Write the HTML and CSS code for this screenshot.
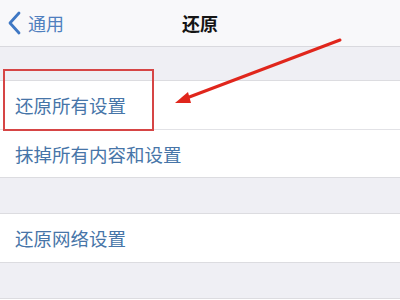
FILE: index.html
```html
<!DOCTYPE html>
<html lang="zh-CN">
<head>
  <meta charset="UTF-8" />
  <title>还原</title>
  <link rel="stylesheet" href="styles.css">
</head>
<body>
  <header class="nav">
    <div class="back">
      <svg class="chev" width="14" height="24" viewBox="0 0 14 24">
        <path d="M12 2 L3 12 L12 22" fill="none" stroke="#3f78c4" stroke-width="2.8" stroke-linecap="round" stroke-linejoin="round"/>
      </svg>
      <span>通用</span>
    </div>
    <h1>还原</h1>
  </header>

  <div class="gap first"></div>
  <ul class="group">
    <li class="row">还原所有设置</li>
    <li class="row">抹掉所有内容和设置</li>
  </ul>

  <div class="gap"></div>
  <ul class="group">
    <li class="row">还原网络设置</li>
  </ul>

  <div class="gap"></div>
  <div class="group tail"></div>

  <!-- 标注 -->
  <div class="mark-box"></div>
  <svg class="mark-arrow" width="400" height="300" viewBox="0 0 400 300">
    <path d="M340 40 L184 99" stroke="#e0261c" stroke-width="3" stroke-linecap="round"/>
    <path d="M175 103 L188 92 L191 103 Z" fill="#e0261c"/>
  </svg>
</body>
</html>
```

FILE: styles.css
```css
* {
  margin: 0;
  padding: 0;
  box-sizing: border-box;
}

html, body {
  width: 400px;
  height: 300px;
  overflow: hidden;
}

body {
  position: relative;
  background-color: #efeff4;
  font-family: "Noto Sans CJK SC", "Noto Sans", sans-serif;
}

/* NAV */
.nav {
  height: 47px;
  background-color: #f8f8fa;
  border-bottom: 1px solid #d9d9de;
  display: flex;
  align-items: center;
  justify-content: center;
  position: relative;
}
.back {
  position: absolute;
  left: 7px;
  top: 11px;
  display: flex;
  align-items: center;
  gap: 7px;
  color: #4f7fbe;
  font-size: 18px;
  line-height: 24px;
}
.nav h1 {
  font-size: 18px;
  font-weight: 700;
  color: #151515;
  margin-top: -1px;
}

.gap {
  height: 35px;
}
.gap.first {
  height: 33px;
}

.group {
  list-style: none;
  background-color: #fff;
  border-top: 1px solid #dcdce0;
  border-bottom: 1px solid #dcdce0;
}
.group.tail {
  height: 10px;
  border-bottom: none;
}
.row {
  height: 48px;
  padding-left: 15px;
  display: flex;
  align-items: center;
  font-size: 18.5px;
  color: #4775a8;
  position: relative;
}
.row + .row {
  border-top: 1px solid #e2e2e6;
}

.mark-box {
  position: absolute;
  left: 3px;
  top: 69px;
  width: 151px;
  height: 62px;
  border: 2px solid #d64545;
}
.mark-arrow {
  position: absolute;
  left: 0;
  top: 0;
}
```
